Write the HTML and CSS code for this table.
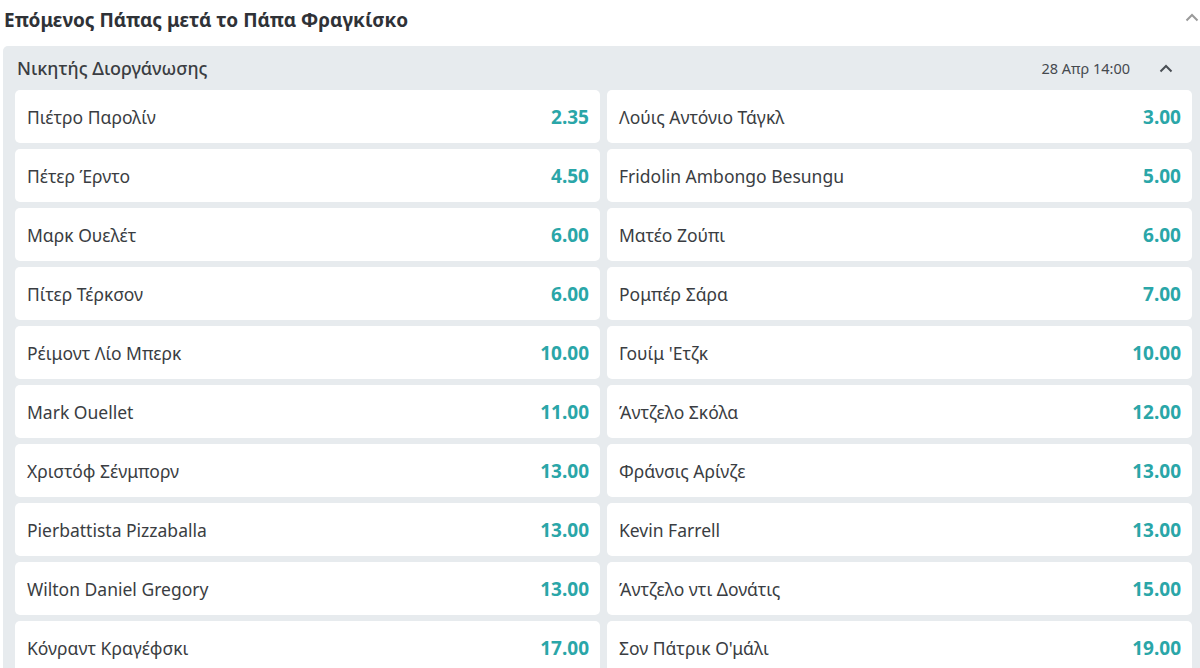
FILE: index.html
```html
<!DOCTYPE html>
<html lang="el">
<head>
  <meta charset="UTF-8">
  <meta name="viewport" content="width=device-width, initial-scale=1.0">
  <title>Επόμενος Πάπας</title>
  <link rel="stylesheet" href="styles.css">
</head>
<body>
  <div class="market">
    <div class="market-title">
      <h2>Επόμενος Πάπας μετά το Πάπα Φραγκίσκο</h2>
      <svg class="chev chev-light" width="14" height="9" viewBox="0 0 14 9"><path d="M1.5 7.5 L7 2 L12.5 7.5" fill="none" stroke="#9a9a9a" stroke-width="2"/></svg>
    </div>

    <div class="panel">
      <div class="panel-head">
        <span class="panel-name">Νικητής Διοργάνωσης</span>
        <span class="panel-date">28 Απρ 14:00</span>
        <svg class="chev" width="14" height="9" viewBox="0 0 14 9"><path d="M1.5 7.5 L7 2 L12.5 7.5" fill="none" stroke="#4a4f55" stroke-width="2"/></svg>
      </div>

      <div class="grid">
        <div class="odd"><span>Πιέτρο Παρολίν</span><b>2.35</b></div>
        <div class="odd"><span>Λούις Αντόνιο Τάγκλ</span><b>3.00</b></div>
        <div class="odd"><span>Πέτερ Έρντο</span><b>4.50</b></div>
        <div class="odd"><span>Fridolin Ambongo Besungu</span><b>5.00</b></div>
        <div class="odd"><span>Μαρκ Ουελέτ</span><b>6.00</b></div>
        <div class="odd"><span>Ματέο Ζούπι</span><b>6.00</b></div>
        <div class="odd"><span>Πίτερ Τέρκσον</span><b>6.00</b></div>
        <div class="odd"><span>Ρομπέρ Σάρα</span><b>7.00</b></div>
        <div class="odd"><span>Ρέιμοντ Λίο Μπερκ</span><b>10.00</b></div>
        <div class="odd"><span>Γουίμ 'Ετζκ</span><b>10.00</b></div>
        <div class="odd"><span>Mark Ouellet</span><b>11.00</b></div>
        <div class="odd"><span>Άντζελο Σκόλα</span><b>12.00</b></div>
        <div class="odd"><span>Χριστόφ Σένμπορν</span><b>13.00</b></div>
        <div class="odd"><span>Φράνσις Αρίνζε</span><b>13.00</b></div>
        <div class="odd"><span>Pierbattista Pizzaballa</span><b>13.00</b></div>
        <div class="odd"><span>Kevin Farrell</span><b>13.00</b></div>
        <div class="odd"><span>Wilton Daniel Gregory</span><b>13.00</b></div>
        <div class="odd"><span>Άντζελο ντι Δονάτις</span><b>15.00</b></div>
        <div class="odd"><span>Κόνραντ Κραγέφσκι</span><b>17.00</b></div>
        <div class="odd"><span>Σον Πάτρικ Ο'μάλι</span><b>19.00</b></div>
      </div>
    </div>
  </div>
</body>
</html>
```

FILE: styles.css
```css
body {
  margin: 0;
  font-family: "Noto Sans", "Open Sans", sans-serif;
  color: #3a3d42;
  background: #fff;
  overflow: hidden;
}

.market {
  padding: 0 0 0 3px;
}

.market-title {
  display: flex;
  align-items: center;
  justify-content: space-between;
  height: 46px;
  padding-left: 1px;
}

.market-title h2 {
  margin: 0;
  font-size: 19px;
  font-weight: 700;
  color: #2f3237;
  position: relative;
  top: -3px;
}

.chev-light {
  margin-right: 1px;
  position: relative;
  top: -6px;
}

.panel {
  background: #e7ebee;
  border-radius: 5px 0 0 0;
  padding: 0 8px 6px 12px;
}

.panel-head {
  display: flex;
  align-items: center;
  height: 44px;
  padding-left: 2px;
}

.panel-name {
  flex: 1;
  font-size: 18px;
  font-weight: 500;
  color: #3a3d42;
}

.panel-date {
  font-size: 14.5px;
  color: #45494e;
  margin-right: 29px;
}

.panel-head .chev {
  margin-right: 19px;
}

.grid {
  display: grid;
  grid-template-columns: 585px 585px;
  column-gap: 7px;
  row-gap: 6px;
}

.odd {
  display: flex;
  align-items: center;
  justify-content: space-between;
  height: 53px;
  background: #fff;
  border-radius: 5px;
  padding: 0 11px 0 12px;
}

.odd span {
  font-size: 17.5px;
  color: #3a3d42;
}

.odd b {
  font-size: 19px;
  font-weight: 700;
  color: #2aa6a8;
}
```
